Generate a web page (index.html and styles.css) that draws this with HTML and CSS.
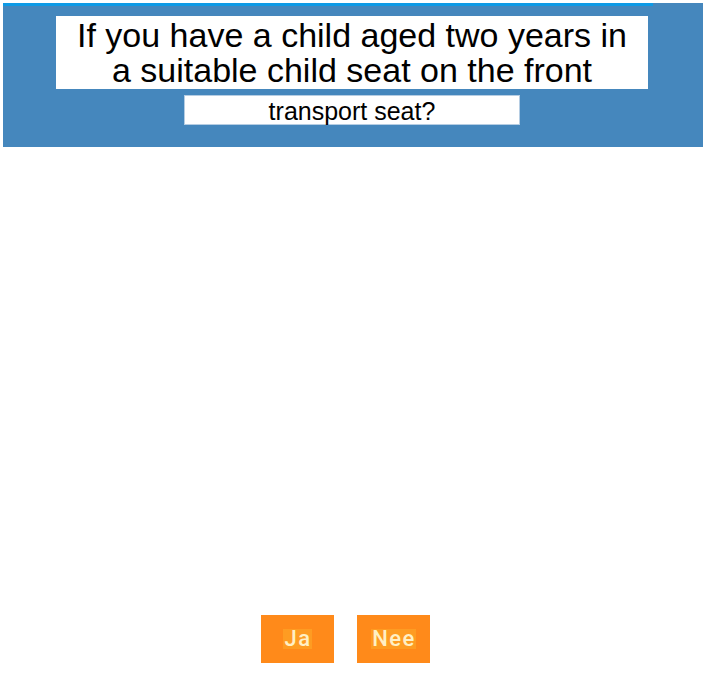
FILE: index.html
```html
<!DOCTYPE html>
<html>
<head>
<meta charset="utf-8">
<link rel="stylesheet" href="styles.css">
</head>
<body>
<div class="page">
  <header class="panel">
    <div class="topbar"></div>
    <div class="panel-body">
      <div class="q-main">If you have a child aged two years in<br>a suitable child seat on the front</div>
      <div class="q-sub">transport seat?</div>
    </div>
  </header>
  <div class="spacer"></div>
  <div class="actions">
    <button class="btn"><span class="lbl">Ja</span></button>
    <button class="btn"><span class="lbl">Nee</span></button>
  </div>
</div>
</body>
</html>
```
FILE: styles.css
```css
html, body {
  margin: 0;
  padding: 0;
  background: #ffffff;
}
.page {
  width: 709px;
  height: 673px;
  padding: 3px 6px 0 3px;
  box-sizing: border-box;
  display: flex;
  flex-direction: column;
}
.panel {
  background: #4587bd;
  height: 144px;
  display: flex;
  flex-direction: column;
}
.topbar {
  height: 3px;
  width: 650px;
  background: #0d9ae6;
}
.panel-body {
  display: flex;
  flex-direction: column;
  align-items: flex-start;
  padding: 10px 0 0 53px;
}
.q-main {
  width: 592px;
  height: 73px;
  background: #ffffff;
  font-family: "Liberation Sans", Arial, sans-serif;
  font-size: 34px;
  line-height: 35px;
  text-align: center;
  color: #000;
  box-sizing: border-box;
  padding-top: 2px;
}
.q-sub {
  margin: 6px 0 0 128px;
  width: 336px;
  height: 30px;
  background: #ffffff;
  border: 1px solid #b5cde3;
  box-sizing: border-box;
  font-family: "Liberation Sans", Arial, sans-serif;
  font-size: 25px;
  line-height: 28px;
  padding-top: 1px;
  text-align: center;
  color: #000;
}
.spacer {
  flex: 0 0 468px;
}
.actions {
  display: flex;
  gap: 23px;
  padding-left: 258px;
}
.btn {
  width: 73px;
  height: 48px;
  border: none;
  padding: 0;
  margin: 0;
  background: #ff8a1a;
  display: flex;
  align-items: center;
  justify-content: center;
}
.lbl {
  font-family: Roboto, "Noto Sans", sans-serif;
  font-weight: 500;
  font-size: 22px;
  letter-spacing: 1.5px;
  line-height: 20px;
  padding: 0 0 0 1px;
  color: #fff0c4;
  background: #fe9c22;
}
```
